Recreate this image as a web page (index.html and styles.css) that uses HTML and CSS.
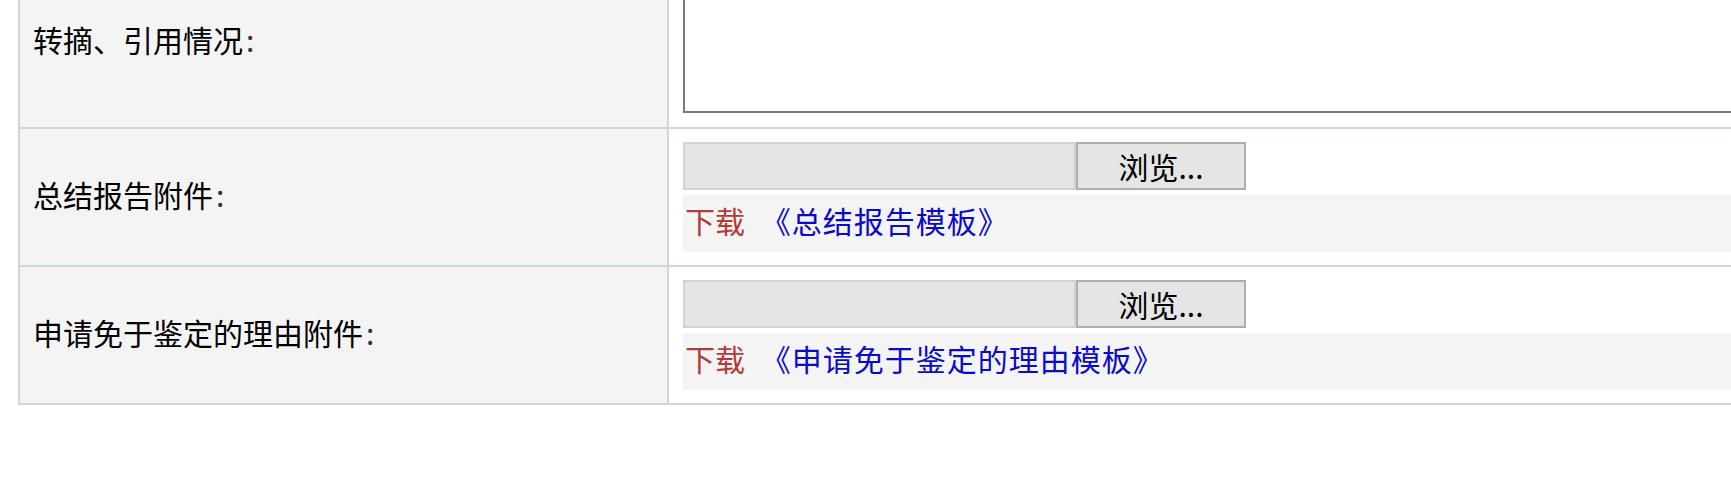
FILE: index.html
```html
<!DOCTYPE html>
<html lang="zh-CN">
<head>
<meta charset="utf-8">
<title>表单</title>
<link rel="stylesheet" href="styles.css">
</head>
<body>
<div class="form">
  <div class="cell label">转摘、引用情况<span class="colon">:</span></div>
  <div class="cell value value-first"><textarea class="area"></textarea></div>

  <div class="cell label">总结报告附件<span class="colon">:</span></div>
  <div class="cell value">
    <div class="file">
      <div class="file-text"></div>
      <div class="file-btn">浏览...</div>
    </div>
    <div class="dl"><span class="dl-red">下载</span> <a class="dl-link" href="#">《总结报告模板》</a></div>
  </div>

  <div class="cell label">申请免于鉴定的理由附件<span class="colon">:</span></div>
  <div class="cell value">
    <div class="file">
      <div class="file-text"></div>
      <div class="file-btn">浏览...</div>
    </div>
    <div class="dl"><span class="dl-red">下载</span> <a class="dl-link" href="#">《申请免于鉴定的理由模板》</a></div>
  </div>
</div>
</body>
</html>
```

FILE: styles.css
```css
html, body {
  margin: 0;
  padding: 0;
  overflow: hidden;
  background: #ffffff;
}

body {
  font-family: "Noto Sans CJK SC", "Liberation Sans", sans-serif;
  color: #000;
}

.form {
  display: grid;
  grid-template-columns: 649px 1100px;
  margin-left: 18px;
  margin-top: -45px;
  border-left: 2px solid #cad7e0;
  border-bottom: 2px solid #cad7e0;
  width: max-content;
}

.cell {
  box-sizing: border-box;
  border-top: 2px solid #cad7e0;
}

.label {
  background: #f4f4f4;
  border-right: 2px solid #cad7e0;
  padding-left: 13px;
  padding-bottom: 7px;
  font-size: 30px;
  display: flex;
  align-items: center;
  line-height: 1;
}

.colon {
  margin-left: 3px;
  color: #333;
}

.value {
  background: #ffffff;
  padding: 13px 0 13px 14px;
}

.value-first {
  padding: 14px 0 14px 14px;
}

.area {
  display: block;
  box-sizing: border-box;
  width: 1100px;
  height: 142px;
  margin: 0;
  border: 2px solid #7a7a7a;
  background: #fff;
  resize: none;
}

.file {
  display: flex;
  height: 48px;
}

.file-text {
  box-sizing: border-box;
  width: 393px;
  height: 48px;
  background: #e4e4e4;
  border: 2px solid #d3d3d3;
}

.file-btn {
  box-sizing: border-box;
  width: 170px;
  height: 48px;
  background: #e5e5e5;
  border: 2px solid #adadad;
  font-size: 30px;
  line-height: 44px;
  text-align: center;
  color: #000;
}

.dl {
  box-sizing: border-box;
  margin-top: 5px;
  height: 57px;
  background: #f4f4f4;
  font-size: 30px;
  line-height: 51px;
  padding-left: 2px;
  white-space: nowrap;
}

.dl-red {
  color: #b33a3a;
}

.dl-link {
  color: #0a0acc;
  text-decoration: none;
  margin-left: 9px;
  letter-spacing: 1px;
}
```
